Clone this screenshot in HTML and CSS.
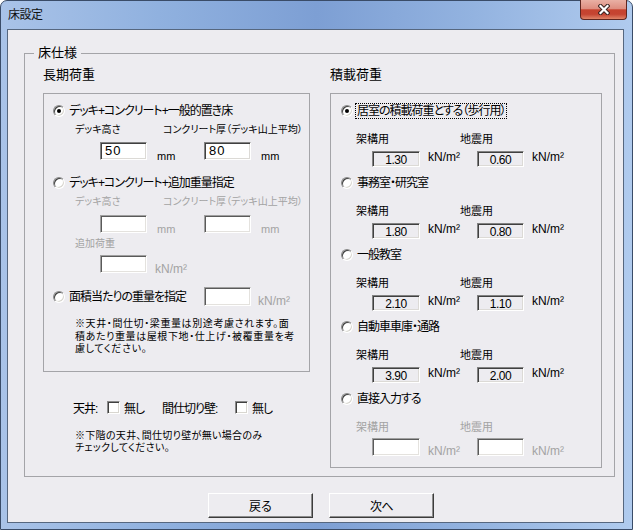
FILE: index.html
```html
<!DOCTYPE html>
<html>
<head>
    <title>床設定</title>
    <meta charset="utf-8">
    <link rel="stylesheet" href="styles.css">
</head>
<body>
<div class="window">
    <div class="titlebar">
        <span class="title">床設定</span>
        <div class="close">
            <svg width="12" height="11" viewBox="0 0 12 11">
                <path d="M2.5 2 L9.5 9 M9.5 2 L2.5 9" stroke="#3b2522" stroke-width="4.2" stroke-linecap="square" fill="none"/>
                <path d="M2.5 2 L9.5 9 M9.5 2 L2.5 9" stroke="#fff" stroke-width="2.2" stroke-linecap="square" fill="none"/>
            </svg>
        </div>
    </div>

    <div class="client">
        <fieldset class="group">
            <legend>床仕様</legend>
            <div class="cols">
                <!-- 長期荷重 -->
                <div class="col col-left">
                    <div class="head">長期荷重</div>
                    <div class="panel panel-left">
                        <div class="rrow">
                            <span class="radio checked"></span><span class="rtext">デッキ+コンクリート+一般的置き床</span>
                        </div>
                        <div class="sub">
                            <span>デッキ高さ</span><span>コンクリート厚（デッキ山上平均）</span>
                        </div>
                        <div class="fields">
                            <span class="edit">50</span><span class="unit">mm</span>
                            <span class="edit">80</span><span class="unit">mm</span>
                        </div>

                        <div class="rrow opt2">
                            <span class="radio"></span><span class="rtext">デッキ+コンクリート+追加重量指定</span>
                        </div>
                        <div class="sub off">
                            <span>デッキ高さ</span><span>コンクリート厚（デッキ山上平均）</span>
                        </div>
                        <div class="fields off fields-b">
                            <span class="edit dis"></span><span class="unit">mm</span>
                            <span class="edit dis"></span><span class="unit">mm</span>
                        </div>
                        <div class="sub off">
                            <span>追加荷重</span>
                        </div>
                        <div class="fields off">
                            <span class="edit dis"></span><span class="unit unit-kn">kN/m²</span>
                        </div>

                        <div class="rrow opt3">
                            <span class="radio"></span><span class="rtext wide">面積当たりの重量を指定</span>
                            <span class="edit dis"></span><span class="unit unit-kn off">kN/m²</span>
                        </div>
                        <div class="note">※天井・間仕切・梁重量は別途考慮されます。面<br>積あたり重量は屋根下地・仕上げ・被覆重量を考<br>慮してください。</div>
                    </div>

                    <div class="walls">
                        <span class="w1">天井:</span><span class="check"></span><span class="w2">無し</span>
                        <span class="w3">間仕切り壁:</span><span class="check"></span><span>無し</span>
                    </div>
                    <div class="note note-walls">※下階の天井、間仕切り壁が無い場合のみ<br>チェックしてください。</div>
                </div>

                <!-- 積載荷重 -->
                <div class="col col-right">
                    <div class="head">積載荷重</div>
                    <div class="panel panel-right">
                        <div class="opt">
                            <div class="rrow">
                                <span class="radio checked"></span><span class="rtext focus">居室の積載荷重とする（歩行用）</span>
                            </div>
                            <div class="sub"><span>架構用</span><span>地震用</span></div>
                            <div class="fields">
                                <span class="ro">1.30</span><span class="unit">kN/m²</span>
                                <span class="ro">0.60</span><span class="unit">kN/m²</span>
                            </div>
                        </div>
                        <div class="opt">
                            <div class="rrow">
                                <span class="radio"></span><span class="rtext">事務室・研究室</span>
                            </div>
                            <div class="sub"><span>架構用</span><span>地震用</span></div>
                            <div class="fields">
                                <span class="ro">1.80</span><span class="unit">kN/m²</span>
                                <span class="ro">0.80</span><span class="unit">kN/m²</span>
                            </div>
                        </div>
                        <div class="opt">
                            <div class="rrow">
                                <span class="radio"></span><span class="rtext">一般教室</span>
                            </div>
                            <div class="sub"><span>架構用</span><span>地震用</span></div>
                            <div class="fields">
                                <span class="ro">2.10</span><span class="unit">kN/m²</span>
                                <span class="ro">1.10</span><span class="unit">kN/m²</span>
                            </div>
                        </div>
                        <div class="opt">
                            <div class="rrow">
                                <span class="radio"></span><span class="rtext">自動車車庫・通路</span>
                            </div>
                            <div class="sub"><span>架構用</span><span>地震用</span></div>
                            <div class="fields">
                                <span class="ro">3.90</span><span class="unit">kN/m²</span>
                                <span class="ro">2.00</span><span class="unit">kN/m²</span>
                            </div>
                        </div>
                        <div class="opt">
                            <div class="rrow">
                                <span class="radio"></span><span class="rtext">直接入力する</span>
                            </div>
                            <div class="sub off"><span>架構用</span><span>地震用</span></div>
                            <div class="fields off fields-last">
                                <span class="edit dis"></span><span class="unit">kN/m²</span>
                                <span class="edit dis"></span><span class="unit">kN/m²</span>
                            </div>
                        </div>
                    </div>
                </div>
            </div>
        </fieldset>

        <div class="buttons">
            <button type="button" class="btn">戻る</button>
            <button type="button" class="btn">次へ</button>
        </div>
    </div>
</div>
</body>
</html>
```

FILE: styles.css
```css
* {
    box-sizing: border-box;
}
body {
    margin: 0;
    width: 633px;
    height: 530px;
    overflow: hidden;
    background: #fff;
    font-family: "Liberation Sans", "Noto Sans CJK JP", sans-serif;
    font-size: 12px;
    color: #000;
    font-feature-settings: "palt";
}
.window {
    width: 633px;
    height: 530px;
    border: 1px solid #3a4c68;
    border-radius: 7px 7px 0 0;
    background: linear-gradient(to right, #a9c3e8, #90b1df 25%, #7d9fd4 50%, #93b3e0 75%, #b0cbee);
    padding: 0 8px 6px 6px;
    display: flex;
    flex-direction: column;
}
.titlebar {
    height: 28px;
    display: flex;
    align-items: flex-start;
}
.title {
    margin: 6px 0 0 1px;
    line-height: 16px;
    letter-spacing: -0.5px;
    color: #111;
}
.close {
    margin: -1px -3px 0 auto;
    width: 47px;
    height: 20px;
    border: 1px solid #5e2620;
    border-top: none;
    border-radius: 0 0 4px 4px;
    background: linear-gradient(#e9b0a4 0%, #de8e80 45%, #c6432f 52%, #c54432 75%, #e08468 100%);
    display: flex;
    align-items: center;
    justify-content: center;
}
.client {
    flex: 1;
    border: 1px solid #56677f;
    background: #edecf0;
    display: flex;
    flex-direction: column;
}

/* group box */
.group {
    margin: 16px 8px 0 16px;
    padding: 7px 12px 8px 18px;
    border: 1px solid #a4a4a8;
    min-width: 0;
}
.group legend {
    font-size: 13px;
    line-height: 14px;
    padding: 0 4px;
    margin-left: -9px;
}
.cols {
    display: flex;
    gap: 20px;
}
.col-left {
    width: 267px;
}
.col-right {
    width: 272px;
}
.head {
    font-size: 13px;
    line-height: 16px;
    margin-bottom: 10px;
}
.panel {
    border: 1px solid #a4a4a8;
    padding-top: 9px;
}
.panel-left {
    height: 279px;
}
.panel-right {
    height: 375px;
}

/* radio rows */
.rrow {
    display: flex;
    align-items: center;
    height: 16px;
}
.radio {
    width: 12px;
    height: 12px;
    flex: none;
    border-radius: 50%;
    border: 1px solid;
    border-color: #8a8a8a #fff #fff #8a8a8a;
    box-shadow: inset 1px 1px #404040, inset -1px -1px #d8d6d0;
    background: #fff;
    position: relative;
}
.radio.checked::after {
    content: "";
    position: absolute;
    left: 3px;
    top: 3px;
    width: 4px;
    height: 4px;
    border-radius: 50%;
    background: #000;
}
.panel-left .radio {
    margin-left: 9px;
}
.panel-right .radio {
    margin-left: 10px;
}
.rtext {
    margin-left: 2px;
    padding: 0 1px;
    border: 1px solid transparent;
    line-height: 14px;
    letter-spacing: -1px;
    white-space: nowrap;
}
.rtext.focus {
    border: 1px dotted #000;
}
.rtext.wide {
    width: 137px;
}
.opt2 {
    margin-top: 15px;
}
.opt3 {
    margin-top: 14px;
    height: 19px;
}

/* labels above inputs */
.sub {
    display: grid;
    white-space: nowrap;
}
.panel-left .sub {
    grid-template-columns: 88px auto;
    padding-left: 31px;
    margin-top: 5px;
    font-size: 10px;
    line-height: 12px;
}
.panel-right .sub {
    grid-template-columns: 104px auto;
    padding-left: 25px;
    margin-top: 14px;
    font-size: 11px;
    line-height: 12px;
}
.off,
.off .unit,
.unit.off {
    color: #a3a3a3;
}

/* input rows */
.fields {
    display: grid;
}
.panel-left .fields {
    grid-template-columns: 47px 57px 47px auto;
    padding-left: 56px;
    margin-top: 6px;
    height: 18px;
}
.panel-left .fields-b {
    margin-top: 7px;
}
.panel-left .sub + .fields + .sub {
    margin-top: 5px;
}
.panel-left .fields-b + .sub + .fields {
    margin-top: 5px;
}
.panel-right .fields {
    grid-template-columns: 48px 57px 47px auto;
    padding-left: 41px;
    margin-top: 6px;
    height: 16px;
}
.panel-right .opt + .opt {
    margin-top: 8px;
}
.panel-right .fields-last {
    margin-top: 5px;
    height: 18px;
}
.edit,
.ro {
    display: block;
    height: 18px;
    border: 1px solid;
    border-color: #828282 #fff #fff #828282;
    box-shadow: inset 1px 1px #404040, inset -1px -1px #dcdad6;
}
.edit {
    background: #fff;
    font-size: 13px;
    line-height: 16px;
    padding-left: 4px;
    letter-spacing: 1px;
}
.edit.dis {
    border-color: #a0a0a0 #fff #fff #a0a0a0;
    box-shadow: inset 1px 1px #5a5a5a, inset -1px -1px #e4e2de;
}
.ro {
    height: 16px;
    text-align: center;
    line-height: 14px;
    letter-spacing: -0.5px;
    padding-top: 1px;
}
.unit {
    white-space: nowrap;
}
.panel-left .unit {
    align-self: end;
    font-size: 11px;
    line-height: 12px;
    margin-bottom: -2px;
    padding-left: 10px;
}
.panel-left .unit-kn {
    font-size: 12px;
    padding-left: 8px;
}
.opt3 .edit {
    width: 47px;
    height: 19px;
    flex: none;
}
.opt3 .unit-kn {
    align-self: flex-end;
    padding-left: 7px;
    font-size: 12px;
    line-height: 12px;
    margin-bottom: -1px;
}
.panel-right .unit {
    align-self: start;
    line-height: 12px;
    padding-left: 8px;
}
.panel-right .fields-last .unit {
    align-self: end;
    margin-bottom: -1px;
}

/* notes */
.note {
    font-size: 10px;
    line-height: 12.5px;
    letter-spacing: 0.6px;
    white-space: nowrap;
    margin: 12px 0 0 31px;
}
.note-walls {
    margin: 15px 0 0 32px;
    line-height: 12px;
    letter-spacing: 0.3px;
}

/* ceiling / partition checkboxes */
.walls {
    display: flex;
    align-items: center;
    height: 16px;
    margin: 27px 0 0 30px;
    letter-spacing: -1px;
    white-space: nowrap;
}
.w1 {
    width: 34px;
}
.w2 {
    width: 38px;
}
.w3 {
    width: 73px;
}
.check {
    width: 13px;
    height: 13px;
    flex: none;
    margin-right: 4px;
    border: 1px solid;
    border-color: #8a8a8a #fff #fff #8a8a8a;
    box-shadow: inset 1px 1px #404040, inset -1px -1px #d8d6d0;
    background: #fff;
}

/* buttons */
.buttons {
    display: flex;
    gap: 16px;
    margin: 16px 0 0 200px;
}
.btn {
    width: 105px;
    height: 25px;
    font-family: "Liberation Sans", "Noto Sans CJK JP", sans-serif;
    font-size: 12px;
    letter-spacing: -0.5px;
    color: #000;
    background: #edecf0;
    border: 1px solid;
    border-color: #fff #3c3c3c #3c3c3c #fff;
    box-shadow: inset -1px -1px #8c8c8c;
    padding: 0;
}
```
